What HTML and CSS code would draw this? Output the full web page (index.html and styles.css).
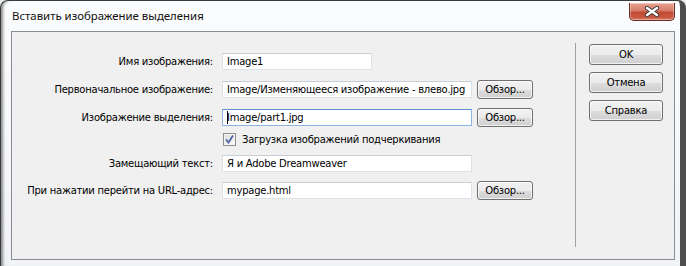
FILE: index.html
```html
<!DOCTYPE html>
<html lang="ru">
<head>
  <meta charset="UTF-8" />
  <title>Вставить изображение выделения</title>
  <link rel="stylesheet" href="styles.css">
</head>
<body>
  <div class="window">
    <div class="titlebar">
      <span class="title">Вставить изображение выделения</span>
      <button class="close" title="Закрыть">
        <svg width="16" height="11" viewBox="0 0 16 11">
          <path d="M3 2 L13 9 M13 2 L3 9" stroke="#3b3b3b" stroke-width="4.2" stroke-linecap="round"/>
          <path d="M3 2 L13 9 M13 2 L3 9" stroke="#fff" stroke-width="2.4" stroke-linecap="round"/>
        </svg>
      </button>
    </div>

    <div class="client">
      <div class="form">
        <div class="row">
          <label class="label">Имя изображения:</label>
          <div class="field short">Image1</div>
        </div>
        <div class="row">
          <label class="label">Первоначальное изображение:</label>
          <div class="field">Image/Изменяющееся изображение - влево.jpg</div>
          <button class="btn browse">Обзор...</button>
        </div>
        <div class="row">
          <label class="label">Изображение выделения:</label>
          <div class="field focus"><span class="caret"></span>Image/part1.jpg</div>
          <button class="btn browse">Обзор...</button>
        </div>
        <div class="row check-row">
          <span class="label"></span>
          <span class="checkbox">
            <svg width="11" height="11" viewBox="0 0 11 11">
              <path d="M2 5.5 L4.5 8.5 L9 1.5" fill="none" stroke="#4b62a4" stroke-width="1.8"/>
            </svg>
          </span>
          <span class="check-text">Загрузка изображений подчеркивания</span>
        </div>
        <div class="row alt-row">
          <label class="label">Замещающий текст:</label>
          <div class="field">Я и Adobe Dreamweaver</div>
        </div>
        <div class="row url-row">
          <label class="label">При нажатии перейти на URL-адрес:</label>
          <div class="field">mypage.html</div>
          <button class="btn browse">Обзор...</button>
        </div>
      </div>

      <div class="divider"></div>

      <div class="actions">
        <button class="btn action">OK</button>
        <button class="btn action">Отмена</button>
        <button class="btn action">Справка</button>
      </div>
    </div>
  </div>
</body>
</html>
```

FILE: styles.css
```css
* { box-sizing: border-box; margin: 0; padding: 0; }

html, body {
  width: 686px;
  height: 266px;
  overflow: hidden;
  background: #e9ecef;
}

.window {
  width: 686px;
  height: 266px;
  padding: 0 5px 0 10px;
  border: 1px solid #3a3a3a;
  border-right: 6px solid #4d4d4d;
  border-bottom: none;
  border-radius: 8px 8px 0 0;
  background: linear-gradient(to bottom, #fbfcfd, #f1f3f6);
  box-shadow: inset 4px 0 3px -2px rgba(0,0,0,0.45);
  font-family: 'DejaVu Sans', Tahoma, sans-serif;
  font-size: 10px;
  letter-spacing: -0.25px;
  color: #000;
}

.titlebar {
  height: 30px;
  display: flex;
  align-items: flex-start;
  justify-content: space-between;
}

.title {
  font-family: 'Noto Sans', 'Segoe UI', sans-serif;
  font-size: 11.4px;
  letter-spacing: 0;
  margin: 7px 0 0 1px;
  color: #111;
}

.close {
  width: 46px;
  height: 18px;
  margin-top: 2px;
  border: 1px solid #6b2c25;
  border-top: none;
  border-radius: 0 0 5px 5px;
  background: linear-gradient(to bottom, #e8a494 0%, #d77a68 45%, #c24a35 55%, #c9583f 85%, #d6846f 100%);
  box-shadow: inset 0 0 0 1px rgba(255,255,255,0.35);
  display: flex;
  align-items: center;
  justify-content: center;
}

.client {
  height: 229px;
  border: 1px solid #898c95;
  background: #f0f0f0;
  display: flex;
}

.form {
  width: 563px;
  padding-top: 20px;
  display: flex;
  flex-direction: column;
}

.row {
  height: 19px;
  display: flex;
  align-items: center;
  margin-top: 9px;
}

.row:first-child { margin-top: 0; }
.check-row { margin-top: 3px; }
.alt-row { margin-top: 5px; }
.url-row { margin-top: 8px; }

.label {
  width: 201px;
  margin-right: 9px;
  text-align: right;
  white-space: nowrap;
}

.field {
  width: 250px;
  height: 17px;
  padding-left: 4px;
  border: 1px solid #dde2e8;
  border-top-color: #c9ced6;
  background: #fff;
  line-height: 15px;
  white-space: nowrap;
  overflow: hidden;
}

.field.short { width: 150px; }

.field.focus {
  border-color: #8db2e3;
  border-top-color: #5d8fcf;
}

.caret {
  display: inline-block;
  width: 1px;
  height: 13px;
  margin-right: -1px;
  vertical-align: -3px;
  background: #000;
}

.btn {
  font-family: inherit;
  font-size: inherit;
  letter-spacing: inherit;
  color: #000;
  border: 1px solid #707070;
  border-radius: 3px;
  background: linear-gradient(to bottom, #f2f2f2 0%, #ebebeb 50%, #dddddd 51%, #cfcfcf 100%);
  box-shadow: inset 0 0 0 1px rgba(255,255,255,0.7);
}

.browse {
  width: 56px;
  height: 19px;
  margin-left: 5px;
}

.checkbox {
  width: 13px;
  height: 13px;
  margin-left: 1px;
  border: 1px solid #8e8f8f;
  background: linear-gradient(135deg, #dcdcdc, #fbfbfb);
  box-shadow: inset 0 0 0 1px #f4f4f4;
  display: flex;
  align-items: center;
  justify-content: center;
}

.check-text { margin-left: 6px; }

.divider {
  width: 1px;
  height: 204px;
  margin-top: 11px;
  background: #a0a0a0;
}

.actions {
  padding: 12px 0 0 13px;
  display: flex;
  flex-direction: column;
  gap: 7px;
}

.action {
  width: 74px;
  height: 21px;
}
```
